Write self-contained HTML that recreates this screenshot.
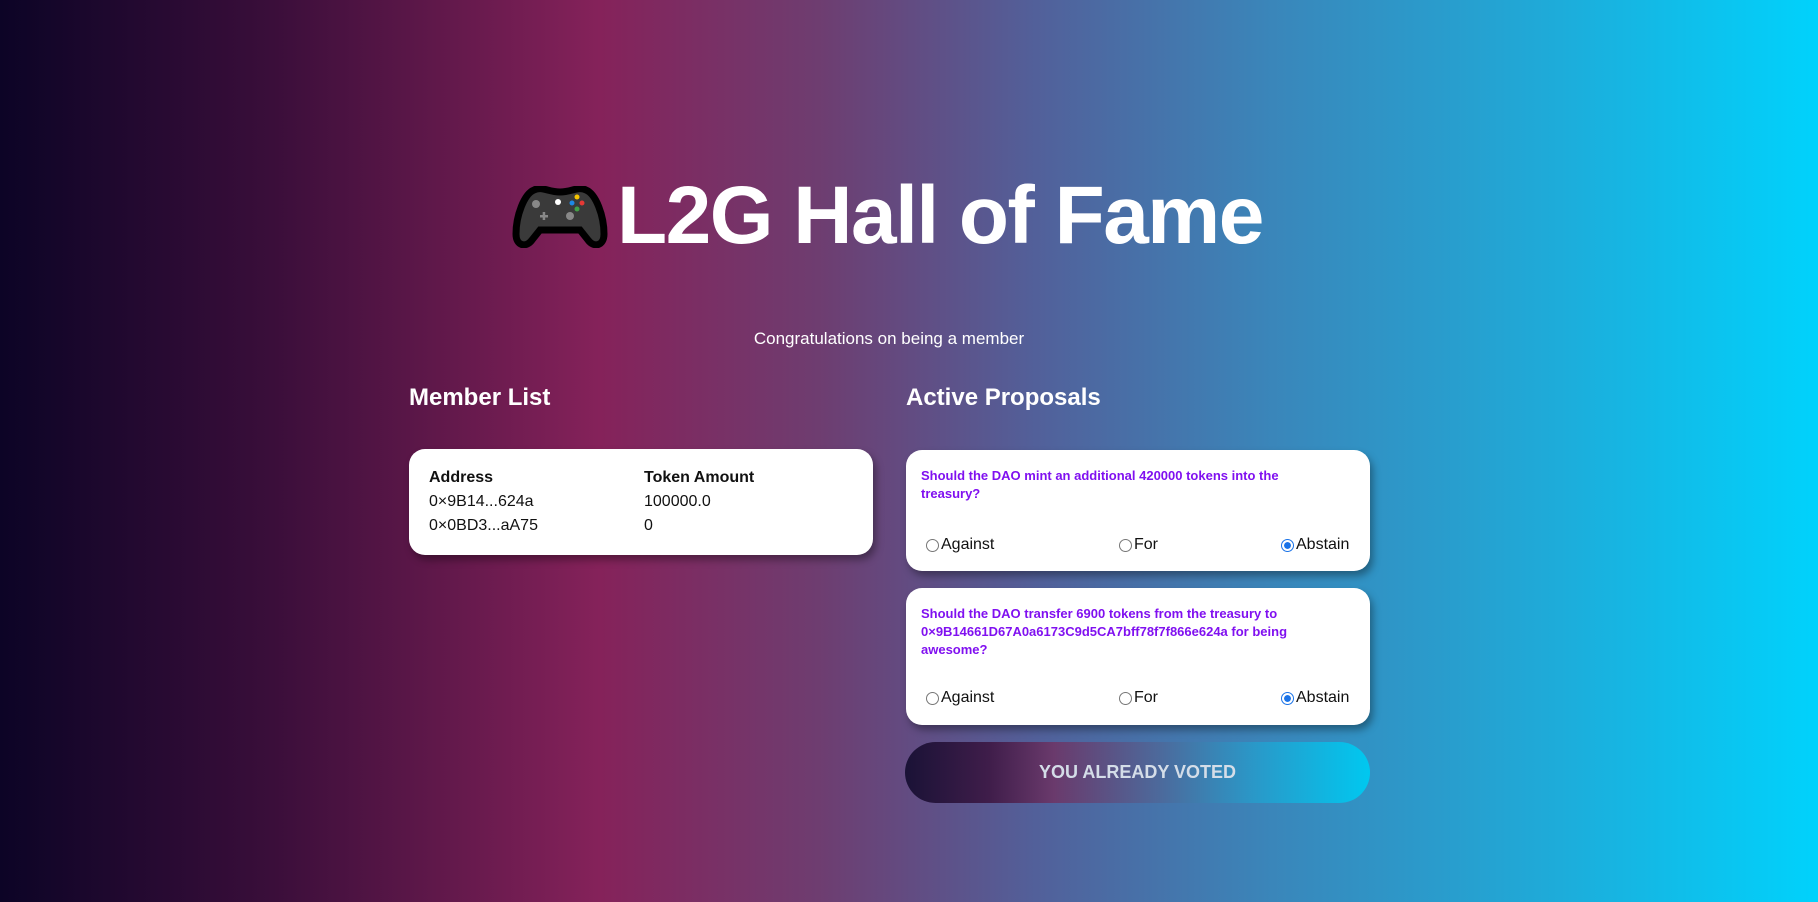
<!DOCTYPE html>
<html><head><meta charset="utf-8"><style>
*{margin:0;padding:0;box-sizing:border-box}
body{width:1818px;height:902px;overflow:hidden;font-family:"Liberation Sans",sans-serif;color:#fff;
background:linear-gradient(90deg,#0c0426 0%,#3a0e3a 15%,#85225a 33%,#6e3d70 45%,#52609a 57%,#3a86ba 70%,#1faad8 85%,#00d2fc 100%);position:relative}
.abs{position:absolute}
h1{position:absolute;left:617px;top:168px;font-size:82px;font-weight:bold;letter-spacing:-1.5px;white-space:nowrap;line-height:96px}
.sub{left:0;width:1778px;text-align:center;top:329px;font-size:17px}
h2{position:absolute;font-size:24px;font-weight:bold;top:384px}
.card{position:absolute;background:#fff;border-radius:16px;box-shadow:3px 5px 8px rgba(0,0,0,.35);color:#111}
.q{position:absolute;left:15px;top:17px;right:30px;color:#8010f0;font-weight:bold;font-size:13px;line-height:18px}
.r{position:absolute;font-size:16px;display:flex;align-items:center;gap:2px;line-height:18px}
.r i{display:inline-block;width:13px;height:13px;border:1px solid #777;border-radius:50%;background:#fff}
.r i.on{border:1px solid #1a73e8;background:radial-gradient(circle,#1a73e8 0 3.2px,#fff 3.6px 100%)}
.t{position:absolute;font-size:16px}
</style></head><body>
<svg class="abs" style="left:512px;top:186px" width="96" height="62" viewBox="0 0 96 62">
<path d="M22 4 C30 0 36 6 48 6 C60 6 66 0 74 4 C84 8 92 30 92 48 C92 60 82 62 76 54 L68 44 L28 44 L20 54 C14 62 4 60 4 48 C4 30 12 8 22 4Z" fill="#3a3a3a" stroke="#000" stroke-width="7"/>
<circle cx="24" cy="18" r="4" fill="#888"/><circle cx="46" cy="16" r="3" fill="#fff"/>
<circle cx="65" cy="11" r="2.5" fill="#f5c400"/><circle cx="60" cy="17" r="2.5" fill="#1e88e5"/><circle cx="70" cy="17" r="2.5" fill="#e53935"/><circle cx="65" cy="23" r="2.5" fill="#43a047"/>
<rect x="28" y="29" width="8" height="2.5" fill="#888"/><rect x="30.7" y="26" width="2.5" height="8" fill="#888"/>
<circle cx="58" cy="30" r="4" fill="#888"/>
</svg>
<h1>L2G Hall of Fame</h1>
<div class="abs sub">Congratulations on being a member</div>
<h2 style="left:409px">Member List</h2>
<h2 style="left:906px">Active Proposals</h2>
<div class="card" style="left:409px;top:449px;width:464px;height:106px">
<div class="t" style="left:20px;top:20px;font-weight:bold">Address</div>
<div class="t" style="left:235px;top:20px;font-weight:bold">Token Amount</div>
<div class="t" style="left:20px;top:44px">0×9B14...624a</div>
<div class="t" style="left:235px;top:44px">100000.0</div>
<div class="t" style="left:20px;top:68px">0×0BD3...aA75</div>
<div class="t" style="left:235px;top:68px">0</div>
</div>
<div class="card" style="left:906px;top:450px;width:464px;height:121px">
<div class="q">Should the DAO mint an additional 420000 tokens into the treasury?</div>
<div class="r" style="left:20px;top:86px"><i></i>Against</div>
<div class="r" style="left:213px;top:86px"><i></i>For</div>
<div class="r" style="left:375px;top:86px"><i class="on"></i>Abstain</div>
</div>
<div class="card" style="left:906px;top:588px;width:464px;height:137px">
<div class="q">Should the DAO transfer 6900 tokens from the treasury to 0×9B14661D67A0a6173C9d5CA7bff78f7f866e624a for being awesome?</div>
<div class="r" style="left:20px;top:101px"><i></i>Against</div>
<div class="r" style="left:213px;top:101px"><i></i>For</div>
<div class="r" style="left:375px;top:101px"><i class="on"></i>Abstain</div>
</div>
<div class="abs" style="left:905px;top:742px;width:465px;height:61px;border-radius:31px;background:linear-gradient(90deg,#1a1236 0%,#3f1d4a 18%,#6a3a6c 32%,#4c6a9c 55%,#2a98c8 75%,#00c8f0 100%);color:#d4dde8;font-weight:bold;font-size:18px;display:flex;align-items:center;justify-content:center">YOU ALREADY VOTED</div>
</body></html>
